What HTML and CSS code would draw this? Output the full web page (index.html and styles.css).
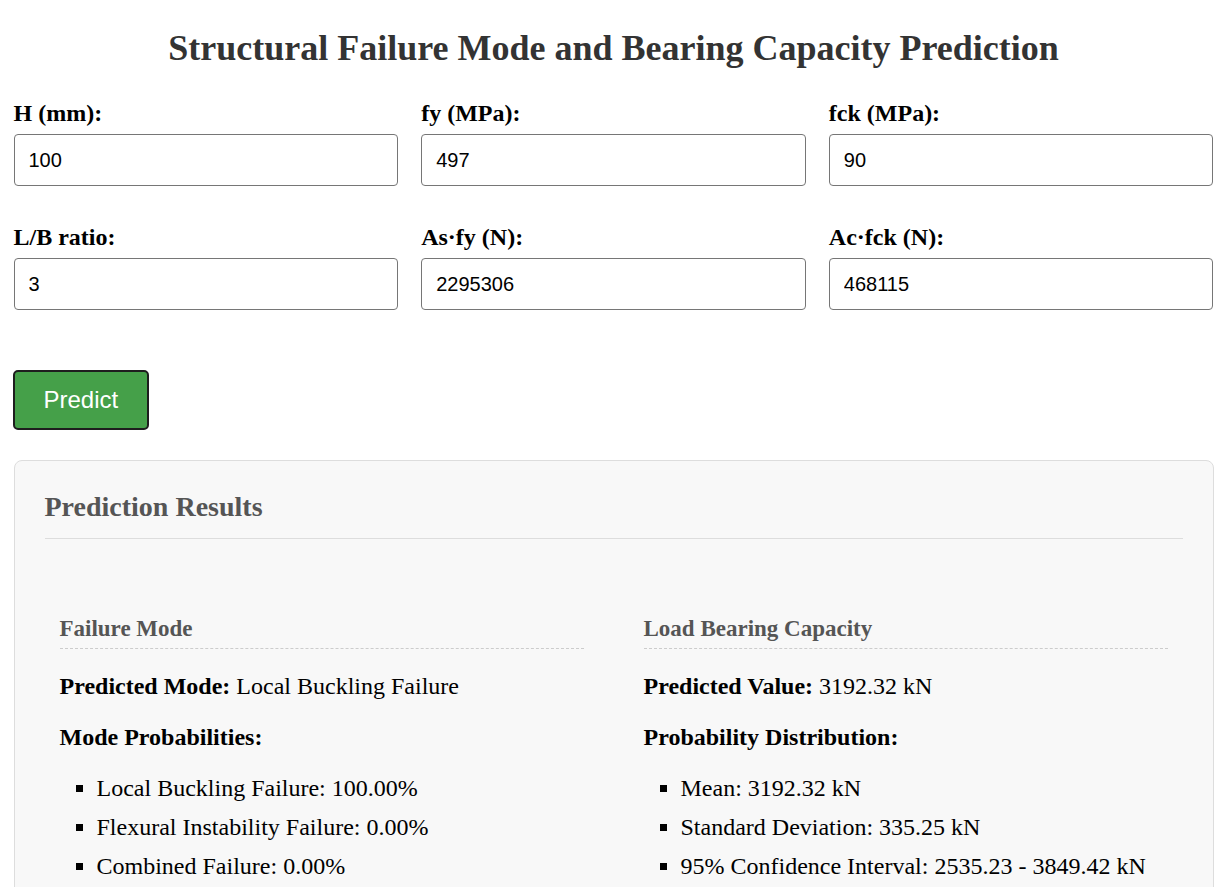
FILE: index.html
```html
<!DOCTYPE html>
<html lang="en">
<head>
<meta charset="utf-8">
<title>Structural Failure Mode and Bearing Capacity Prediction</title>
<link rel="stylesheet" href="styles.css">
</head>
<body>
<div class="container">
  <h1 class="title">Structural Failure Mode and Bearing Capacity Prediction</h1>
  <form class="form-grid">
    <div class="form-group">
      <label for="h">H (mm):</label>
      <input id="h" type="text" value="100">
    </div>
    <div class="form-group">
      <label for="fy">fy (MPa):</label>
      <input id="fy" type="text" value="497">
    </div>
    <div class="form-group">
      <label for="fck">fck (MPa):</label>
      <input id="fck" type="text" value="90">
    </div>
    <div class="form-group">
      <label for="lb">L/B ratio:</label>
      <input id="lb" type="text" value="3">
    </div>
    <div class="form-group">
      <label for="asfy">As·fy (N):</label>
      <input id="asfy" type="text" value="2295306">
    </div>
    <div class="form-group">
      <label for="acfck">Ac·fck (N):</label>
      <input id="acfck" type="text" value="468115">
    </div>
  </form>
  <button class="predict-btn" type="button">Predict</button>
  <div class="results">
    <h2 class="results-title">Prediction Results</h2>
    <div class="results-grid">
      <div class="result-col">
        <h3 class="col-title">Failure Mode</h3>
        <p><strong>Predicted Mode:</strong> Local Buckling Failure</p>
        <p><strong>Mode Probabilities:</strong></p>
        <ul class="prob-list">
          <li>Local Buckling Failure: 100.00%</li>
          <li>Flexural Instability Failure: 0.00%</li>
          <li>Combined Failure: 0.00%</li>
        </ul>
      </div>
      <div class="result-col">
        <h3 class="col-title">Load Bearing Capacity</h3>
        <p><strong>Predicted Value:</strong> 3192.32 kN</p>
        <p><strong>Probability Distribution:</strong></p>
        <ul class="prob-list">
          <li>Mean: 3192.32 kN</li>
          <li>Standard Deviation: 335.25 kN</li>
          <li>95% Confidence Interval: 2535.23 - 3849.42 kN</li>
        </ul>
      </div>
    </div>
  </div>
</div>
</body>
</html>
```
FILE: styles.css
```css
html, body {
  margin: 0;
  padding: 0;
  background: #ffffff;
}
body {
  font-family: "Liberation Serif", "Times New Roman", serif;
  font-size: 24px;
  color: #000;
}
.container {
  max-width: 1200px;
  margin: 0 auto;
}
.title {
  font-size: 36px;
  font-weight: bold;
  color: #333;
  text-align: center;
  margin: 27px 0 31px;
}
.form-grid {
  display: grid;
  grid-template-columns: repeat(3, 1fr);
  column-gap: 23px;
  row-gap: 38px;
  margin: 0;
}
.form-group label {
  display: block;
  font-weight: bold;
  font-size: 24px;
  margin-bottom: 7px;
}
.form-group input {
  display: block;
  box-sizing: border-box;
  width: 100%;
  height: 52px;
  padding: 0 14px;
  font-family: "Liberation Sans", Arial, sans-serif;
  font-size: 20px;
  color: #000;
  border: 1px solid #767676;
  border-radius: 4px;
  background: #fff;
}
.predict-btn {
  display: block;
  margin: 60px 0 30px -1px;
  padding: 14px 29px;
  font-family: "Liberation Sans", Arial, sans-serif;
  font-size: 24px;
  color: #fff;
  background: #45a049;
  border: 2px solid #1e1e1e;
  border-radius: 5px;
}
.results {
  background: #f8f8f8;
  border: 1px solid #ddd;
  border-radius: 8px;
  padding: 30px;
}
.results-title {
  font-size: 28px;
  color: #555;
  margin: 0;
  padding-bottom: 15px;
  border-bottom: 1px solid #ddd;
}
.results-grid {
  display: grid;
  grid-template-columns: 1fr 1fr;
  column-gap: 30px;
  margin-top: 40px;
}
.result-col {
  padding: 15px;
}
.col-title {
  font-size: 23px;
  color: #555;
  margin: 22px 0 0;
  padding-bottom: 6px;
  border-bottom: 1px dashed #ccc;
}
.result-col p {
  margin: 24px 0;
}
.prob-list {
  list-style: square;
  padding-left: 37px;
  margin: 24px 0;
}
.prob-list li {
  margin-bottom: 12px;
}
```
